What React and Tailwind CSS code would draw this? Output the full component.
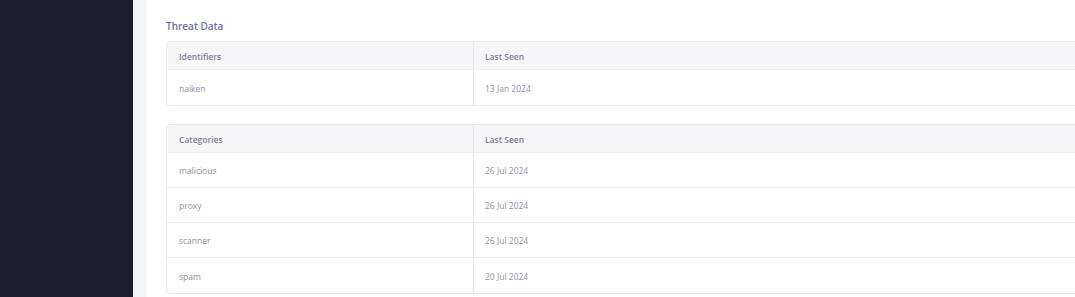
import React from 'react'

const identifiers = [{ name: 'naiken', seen: '13 Jan 2024' }]

const categories = [
    { name: 'malicious', seen: '26 Jul 2024' },
    { name: 'proxy', seen: '26 Jul 2024' },
    { name: 'scanner', seen: '26 Jul 2024' },
    { name: 'spam', seen: '20 Jul 2024' },
]

const DataTable = ({ label, rows }) => {
    return (
        <div className="w-[1000px] shrink-0 rounded-[4px] border border-[#e8e9ee] overflow-hidden">
            <div className="flex h-[28px] bg-[#f6f6f9] text-[#7b7e9c] font-semibold border-b border-[#eeeff3]">
                <div className="w-[307px] pl-3 pt-[3px] flex items-center border-r border-[#e6e7ec]">{label}</div>
                <div className="flex-1 pl-[11px] pt-[3px] flex items-center">Last Seen</div>
            </div>
            {rows.map((r, i) => (
                <div
                    key={r.name}
                    className={`flex h-[35px] text-[#8e91a9] ${i < rows.length - 1 ? 'border-b border-[#ececf0]' : ''}`}
                >
                    <div className="w-[307px] pl-3 pt-[3px] flex items-center border-r border-[#e6e7ec]">{r.name}</div>
                    <div className="flex-1 pl-[11px] pt-[3px] flex items-center">{r.seen}</div>
                </div>
            ))}
        </div>
    )
}

const App = () => {
    return (
        <div className="flex w-[1075px] h-[297px] overflow-hidden font-['Open_Sans',sans-serif] text-[8.5px]">
            <aside className="w-[133px] shrink-0 bg-[#1e1e2e]"></aside>
            <div className="w-[14px] shrink-0 bg-[#f4f5f9]"></div>
            <main className="flex-1 min-w-0 bg-white pl-[19px] pt-[19px] overflow-hidden">
                <h2 className="text-[10px] leading-[14px] font-semibold text-[#6e7197] mb-2">Threat Data</h2>
                <DataTable label="Identifiers" rows={identifiers} />
                <div className="h-[18px]"></div>
                <DataTable label="Categories" rows={categories} />
            </main>
        </div>
    )
}

export default App
